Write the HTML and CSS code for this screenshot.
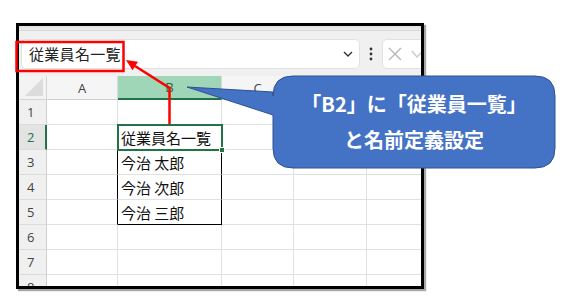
FILE: index.html
```html
<!DOCTYPE html>
<html lang="ja">
<head>
  <meta charset="UTF-8" />
  <title>名前の定義</title>
  <link rel="stylesheet" href="styles.css">
</head>
<body>
  <div class="stage">
    <div class="frame">
      <div class="ribbon"></div>

      <div class="formula-bar">
        <div class="name-box">
          <span class="name-text">従業員名一覧</span>
          <svg class="chevron" width="10" height="6" viewBox="0 0 10 6"><polyline points="1,1 5,5 9,1" fill="none" stroke="#333" stroke-width="1.4"/></svg>
        </div>
        <div class="more">
          <svg width="4" height="14" viewBox="0 0 4 14"><circle cx="2" cy="2" r="1.4" fill="#333"/><circle cx="2" cy="7" r="1.4" fill="#333"/><circle cx="2" cy="12" r="1.4" fill="#333"/></svg>
        </div>
        <div class="fx-box">
          <svg width="14" height="14" viewBox="0 0 14 14"><path d="M1 1 L13 13 M13 1 L1 13" stroke="#b5b5b5" stroke-width="1.3"/></svg>
          <svg width="14" height="10" viewBox="0 0 14 10"><polyline points="1,2 6,8 13,1" fill="none" stroke="#c8c8c8" stroke-width="1.3"/></svg>
        </div>
      </div>

      <div class="sheet">
        <div class="corner"><span class="select-all"></span></div>
        <div class="col-head">A</div>
        <div class="col-head active">B</div>
        <div class="col-head">C</div>
        <div class="col-head"></div>
        <div class="col-head"></div>

        <div class="row-head">1</div>
        <div class="cell"></div><div class="cell"></div><div class="cell"></div><div class="cell"></div><div class="cell"></div>

        <div class="row-head active">2</div>
        <div class="cell"></div>
        <div class="cell selected">従業員名一覧<span class="handle"></span></div>
        <div class="cell"></div><div class="cell"></div><div class="cell"></div>

        <div class="row-head">3</div>
        <div class="cell edge"></div>
        <div class="cell boxed">今治 太郎</div>
        <div class="cell"></div><div class="cell"></div><div class="cell"></div>

        <div class="row-head">4</div>
        <div class="cell edge"></div>
        <div class="cell boxed">今治 次郎</div>
        <div class="cell"></div><div class="cell"></div><div class="cell"></div>

        <div class="row-head">5</div>
        <div class="cell edge"></div>
        <div class="cell boxed last">今治 三郎</div>
        <div class="cell"></div><div class="cell"></div><div class="cell"></div>

        <div class="row-head">6</div>
        <div class="cell"></div><div class="cell"></div><div class="cell"></div><div class="cell"></div><div class="cell"></div>

        <div class="row-head">7</div>
        <div class="cell"></div><div class="cell"></div><div class="cell"></div><div class="cell"></div><div class="cell"></div>

        <div class="row-head">8</div>
        <div class="cell"></div><div class="cell"></div><div class="cell"></div><div class="cell"></div><div class="cell"></div>
      </div>
    </div>

    <!-- annotations drawn over the screenshot -->
    <svg class="overlay" width="586" height="297" viewBox="0 0 586 297">
      <path d="M293 76 H535 Q555 76 555 96 V148 Q555 168 535 168 H293 Q273 168 273 148 V115 L187 87 L273 92 V96 Q273 76 293 76 Z" fill="#4472c4" stroke="#2f528f" stroke-width="1"/>
      <rect x="16.5" y="42" width="107" height="29" fill="none" stroke="#ff0000" stroke-width="2.5"/>
      <polyline points="169.5,124 169.5,88 135,66" fill="none" stroke="#ff0000" stroke-width="2.5"/>
      <polygon points="126,60 138,61.8 132.5,70.2" fill="#ff0000"/>
    </svg>

    <div class="callout">
      <p>「B2」に「従業員一覧」</p>
      <p>と名前定義設定</p>
    </div>
  </div>
</body>
</html>
```

FILE: styles.css
```css
* {
  box-sizing: border-box;
}

body {
  margin: 0;
  background-color: #fff;
  font-family: "Noto Sans CJK JP", "Noto Sans", sans-serif;
}

.stage {
  position: relative;
  width: 586px;
  height: 297px;
  padding: 23px 0 0 16px;
}

.frame {
  width: 408px;
  height: 266px;
  border: 3px solid #000;
  box-shadow: 2px 2px 1px rgba(0, 0, 0, 0.35);
  overflow: hidden;
  background-color: #fff;
}

.ribbon {
  height: 5px;
  background: linear-gradient(#e2e2e2, #ececec);
  border-bottom: 1px solid #d6d6d6;
}

.formula-bar {
  display: flex;
  align-items: center;
  height: 45px;
  padding: 0 0 0 2px;
  background-color: #f0f0f0;
}

.name-box {
  display: flex;
  flex-shrink: 0;
  align-items: center;
  justify-content: space-between;
  width: 339px;
  height: 30px;
  padding: 0 6px 0 7px;
  background-color: #fff;
  border: 1px solid #e2e2e2;
  border-radius: 5px;
}

.name-text {
  font-size: 15px;
  color: #222;
  letter-spacing: 0.3px;
}

.more {
  display: flex;
  flex-shrink: 0;
  justify-content: center;
  width: 22px;
}

.fx-box {
  display: flex;
  flex-shrink: 0;
  align-items: center;
  gap: 9px;
  width: 60px;
  height: 30px;
  padding-left: 5px;
  background-color: #fff;
  border: 1px solid #e2e2e2;
  border-radius: 5px;
}

.sheet {
  display: grid;
  grid-template-columns: 28px 71px 104px 72px 73px 60px;
  grid-template-rows: 24px repeat(8, 25px);
  font-family: "Open Sans", "Noto Sans", sans-serif;
}

.corner {
  position: relative;
  background-color: #f3f3f3;
  border-right: 1px solid #d4d4d4;
  border-bottom: 1px solid #d4d4d4;
}

.select-all {
  position: absolute;
  right: 3px;
  bottom: 3px;
  width: 0;
  height: 0;
  border-left: 18px solid transparent;
  border-bottom: 18px solid #dcdcdc;
}

.col-head {
  display: flex;
  align-items: center;
  justify-content: center;
  font-size: 13px;
  color: #444;
  background-color: #f5f5f5;
  border-right: 1px solid #dadada;
  border-bottom: 1px solid #d0d0d0;
}

.col-head.active {
  color: #1f6a3f;
  background-color: #a0d6b8;
  border-bottom: 2px solid #217346;
}

.row-head {
  display: flex;
  align-items: center;
  padding-left: 8px;
  font-size: 13px;
  color: #444;
  background-color: #f0f0f0;
  border-right: 1px solid #cfcfcf;
  border-bottom: 1px solid #dcdcdc;
}

.row-head.active {
  color: #217346;
  background-color: #e3e3e3;
  border-right: 2px solid #217346;
}

.cell {
  position: relative;
  display: flex;
  align-items: center;
  padding-left: 3px;
  font-family: "Noto Sans CJK JP", sans-serif;
  font-size: 15px;
  color: #111;
  white-space: nowrap;
  border-right: 1px solid #e0e0e0;
  border-bottom: 1px solid #e0e0e0;
}

.cell.edge {
  border-right-color: #000;
}

.cell.boxed {
  border-right-color: #000;
}

.cell.boxed.last {
  border-bottom-color: #000;
}

.cell.selected {
  z-index: 2;
  outline: 2px solid #217346;
  outline-offset: -1px;
}

.handle {
  position: absolute;
  right: -4px;
  bottom: -4px;
  width: 6px;
  height: 6px;
  background-color: #217346;
  border: 1px solid #fff;
}

.overlay {
  position: absolute;
  top: 0;
  left: 0;
  pointer-events: none;
}

.callout {
  position: absolute;
  top: 76px;
  left: 273px;
  width: 282px;
  height: 92px;
  display: flex;
  flex-direction: column;
  align-items: center;
  justify-content: center;
  color: #fff;
  font-size: 20px;
  font-weight: bold;
}

.callout p {
  margin: 0;
  line-height: 36px;
}
```
